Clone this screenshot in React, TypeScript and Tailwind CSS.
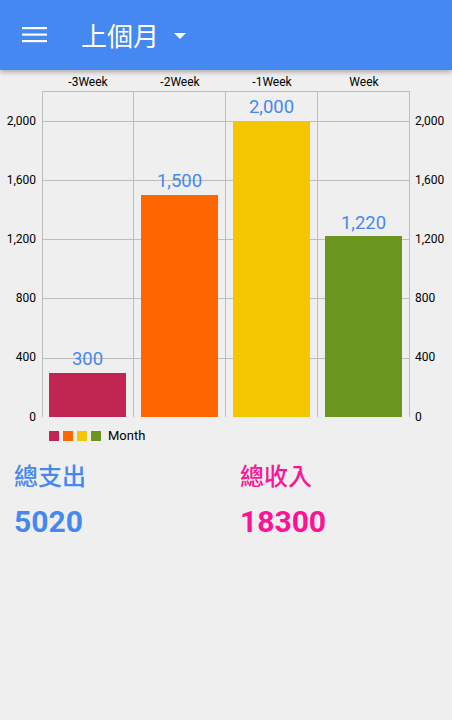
const MAX = 2200;
const PLOT_H = 326;

const bars = [
  { label: "-3Week", value: 300, color: "bg-[#c12552]" },
  { label: "-2Week", value: 1500, color: "bg-[#ff6600]" },
  { label: "-1Week", value: 2000, color: "bg-[#f5c700]" },
  { label: "Week", value: 1220, color: "bg-[#6a961f]" },
];

const ticks = ["2,000", "1,600", "1,200", "800", "400"];

function Axis({ align }: { align: "left" | "right" }) {
  const side = align === "left" ? "items-end pr-[6px]" : "items-start pl-[5px]";
  return (
    <div className={`flex flex-col w-[42px] ${side}`}>
      <div className="h-[51px]" />
      {ticks.map((t, i) => (
        <div key={t} className={`${i === 4 ? "h-[60px]" : "h-[59px]"} flex items-start`}>
          <span className="-translate-y-1/2 text-[12px] leading-none text-black">{t}</span>
        </div>
      ))}
      <div className="h-0 flex items-start">
        <span className="-translate-y-1/2 text-[12px] leading-none text-black">0</span>
      </div>
    </div>
  );
}

export default function App() {
  return (
    <div className="w-[452px] h-[720px] bg-[#efefef] overflow-hidden font-['Roboto','Noto_Sans_CJK_TC',sans-serif]">
      <header className="h-[70px] bg-[#4688f1] flex items-center shadow-[0_2px_5px_rgba(0,0,0,0.3)] relative z-10">
        <svg width="26" height="16" viewBox="0 0 26 16" className="ml-[22px]">
          <rect x="0" y="0" width="25" height="2.2" fill="white" />
          <rect x="0" y="6.5" width="25" height="2.2" fill="white" />
          <rect x="0" y="13" width="25" height="2.2" fill="white" />
        </svg>
        <span className="ml-[33px] text-white text-[26px] font-['Noto_Sans_CJK_TC',sans-serif] leading-none">上個月</span>
        <span className="ml-[15px] mt-[2px] w-0 h-0 border-l-[6px] border-r-[6px] border-t-[6px] border-l-transparent border-r-transparent border-t-white" />
      </header>

      <div className="flex">
        <Axis align="left" />
        <div className="flex flex-col w-[368px]">
          <div className="h-[21px] flex">
            {bars.map((b) => (
              <div key={b.label} className="w-[92px] flex items-end justify-center text-[12px] leading-none text-black pb-[3px]">
                {b.label}
              </div>
            ))}
          </div>
          <div className="grid h-[326px]">
            <div className="[grid-area:1/1] flex flex-col border-l border-[#bdbdbd]">
              <div className="h-[30px] border-t border-[#bdbdbd]" />
              <div className="h-[59px] border-t border-[#bdbdbd]" />
              <div className="h-[59px] border-t border-[#bdbdbd]" />
              <div className="h-[59px] border-t border-[#bdbdbd]" />
              <div className="h-[60px] border-t border-[#bdbdbd]" />
              <div className="h-[59px] border-t border-[#bdbdbd]" />
            </div>
            <div className="[grid-area:1/1] flex">
              {bars.map((b) => (
                <div key={b.label} className="w-[92px] flex flex-col justify-end items-center border-r border-[#bdbdbd] px-[7px]">
                  <span className="text-[18.5px] leading-none text-[#4688f1] mb-[4px]">
                    {b.value.toLocaleString("en-US")}
                  </span>
                  <div className={`w-full ${b.color}`} style={{ height: (b.value / MAX) * PLOT_H }} />
                </div>
              ))}
            </div>
          </div>
        </div>
        <Axis align="right" />
      </div>

      <div className="flex items-center mt-[12px] ml-[49px] gap-[4px]">
        {bars.map((b) => (
          <div key={b.label} className={`w-[10px] h-[10px] ${b.color}`} />
        ))}
        <span className="ml-[3px] text-[13px] leading-none text-black">Month</span>
      </div>

      <div className="flex mt-[21px] px-[14px]">
        <div className="w-[226px] flex flex-col">
          <span className="text-[24px] leading-none font-medium text-[#4688f1] font-['Noto_Sans_CJK_TC',sans-serif]">總支出</span>
          <span className="mt-[20px] text-[30px] leading-none font-bold text-[#4688f1]">5020</span>
        </div>
        <div className="flex flex-col">
          <span className="text-[24px] leading-none font-medium text-[#ff1296] font-['Noto_Sans_CJK_TC',sans-serif]">總收入</span>
          <span className="mt-[20px] text-[30px] leading-none font-bold text-[#ff1296]">18300</span>
        </div>
      </div>
    </div>
  );
}
